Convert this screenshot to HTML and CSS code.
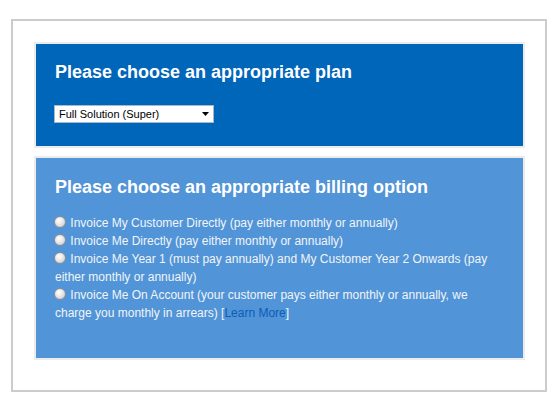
FILE: index.html
```html
<!DOCTYPE html>
<html>
<head>
<meta charset="utf-8">
<link rel="stylesheet" href="styles.css">
</head>
<body>
<div class="frame">
  <div class="panel panel-plan">
    <h2 class="title">Please choose an appropriate plan</h2>
    <div class="select-wrap">
      <select class="plan-select">
        <option>Full Solution (Super)</option>
      </select>
      <svg class="select-arrow" width="7" height="4" viewBox="0 0 7 4"><path d="M0 0H7L3.5 4Z" fill="#000"/></svg>
    </div>
  </div>
  <div class="panel panel-billing">
    <h2 class="title">Please choose an appropriate billing option</h2>
    <div class="options">
      <label class="option"><input type="radio" name="b" class="radio"> Invoice My Customer Directly (pay either monthly or annually)</label>
      <label class="option"><input type="radio" name="b" class="radio"> Invoice Me Directly (pay either monthly or annually)</label>
      <label class="option"><input type="radio" name="b" class="radio"> Invoice Me Year 1 (must pay annually) and My Customer Year 2 Onwards (pay either monthly or annually)</label>
      <label class="option"><input type="radio" name="b" class="radio"> Invoice Me On Account (your customer pays either monthly or annually, we charge you monthly in arrears) [<a class="link" href="#">Learn More</a>]</label>
    </div>
  </div>
</div>
</body>
</html>
```
FILE: styles.css
```css
html, body {
  margin: 0;
  padding: 0;
  background: #fff;
  font-family: "Liberation Sans", Arial, sans-serif;
}
.frame {
  margin: 19px 0 0 11px;
  width: 491px;
  height: 327px;
  border: 2px solid #cccccc;
  padding: 21px 20px 21px 21px;
  display: flex;
  flex-direction: column;
  gap: 8px;
}
.panel {
  border: 2px solid #ececec;
  padding: 17px 19px 0 19px;
  color: #fff;
}
.panel-plan {
  background: #0066b9;
  height: 85px;
}
.panel-billing {
  background: #5194d7;
  height: 182px;
  padding-top: 18px;
}
.title {
  margin: 0;
  font-size: 18px;
  line-height: 22px;
  font-weight: bold;
  color: #fff;
}
.select-wrap {
  position: relative;
  margin: 21px 0 0 -1px;
  width: 160px;
  height: 18px;
}
.plan-select {
  appearance: none;
  -webkit-appearance: none;
  width: 160px;
  height: 18px;
  margin: 0;
  border: 1px solid #a9b7c9;
  border-radius: 0;
  background: #fff;
  font-family: "Liberation Sans", Arial, sans-serif;
  font-size: 11px;
  color: #000;
  padding: 0 0 0 4px;
}
.select-arrow {
  position: absolute;
  left: 148px;
  top: 8px;
}
.options {
  margin-top: 16px;
  display: flex;
  flex-direction: column;
  font-size: 12px;
  line-height: 18px;
  color: #f2f4f8;
}
.option {
  display: block;
}
.radio {
  appearance: none;
  -webkit-appearance: none;
  width: 12px;
  height: 12px;
  margin: 0 1px 0 -1px;
  border-radius: 50%;
  border: 1px solid #8a8f96;
  background: radial-gradient(circle at 40% 35%, #ffffff 0%, #e8e8e8 45%, #bcbcbc 100%);
  vertical-align: -1px;
  box-sizing: border-box;
}
.link {
  color: #0d5cb8;
  text-decoration: none;
}
```
